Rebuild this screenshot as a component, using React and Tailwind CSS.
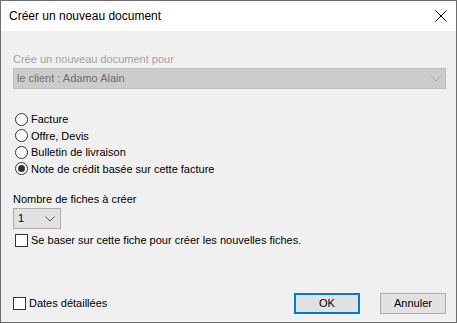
import React, { useState } from "react";

const font = { fontFamily: "'Liberation Sans', Arial, sans-serif" };

const Radio = ({ label, checked, onClick }) => (
  <div className="flex items-center h-[16.5px] cursor-default" onClick={onClick}>
    <span className="w-[13px] h-[13px] rounded-full border border-[#333333] bg-white flex items-center justify-center ml-[2px]">
      {checked && <span className="w-[7px] h-[7px] rounded-full bg-[#333333]" />}
    </span>
    <span className="ml-[3px] text-[11px] text-black">{label}</span>
  </div>
);

const Checkbox = ({ label, checked, onClick, className = "" }) => (
  <div className={"flex items-center cursor-default " + className} onClick={onClick}>
    <span className="w-[13px] h-[13px] border border-[#333333] bg-white flex items-center justify-center">
      {checked && (
        <svg width="9" height="9" viewBox="0 0 9 9">
          <path d="M1 4.5 L3.5 7 L8 1.5" fill="none" stroke="#333" strokeWidth="1.3" />
        </svg>
      )}
    </span>
    <span className="ml-[3px] text-[11px] text-black">{label}</span>
  </div>
);

const Chevron = ({ color }) => (
  <svg width="10" height="6" viewBox="0 0 10 6">
    <path d="M0.5 0.5 L5 5 L9.5 0.5" fill="none" stroke={color} strokeWidth="1" />
  </svg>
);

const App = () => {
  const [docType, setDocType] = useState(3);
  const [baseOn, setBaseOn] = useState(false);
  const [detailed, setDetailed] = useState(false);

  const options = ["Facture", "Offre, Devis", "Bulletin de livraison", "Note de crédit basée sur cette facture"];

  return (
    <div style={font} className="w-[457px] h-[323px] border border-[#6e6e6e] bg-[#f0f0f0] flex flex-col">
      <div className="h-[30px] bg-white flex items-center justify-between pl-[8px] pr-[8px]">
        <span className="text-[12px] text-black">Créer un nouveau document</span>
        <svg width="12" height="12" viewBox="0 0 12 12" className="mr-[1px]">
          <path d="M0.5 0.5 L11.5 11.5 M11.5 0.5 L0.5 11.5" stroke="#000" strokeWidth="1" />
        </svg>
      </div>

      <div className="flex-1 flex flex-col pl-[12px] pr-[10px] pb-[8px]">
        <div className="mt-[21px] text-[11px] leading-[15px] text-[#a0a0a0]">Crée un nouveau document pour</div>
        <div className="mt-[1px] h-[21px] w-[433px] bg-[#cccccc] border border-[#bfbfbf] flex items-center justify-between pl-[3px] pr-[4px]">
          <span className="text-[11px] text-[#6d6d6d]">le client : Adamo Alain</span>
          <Chevron color="#a5a5a5" />
        </div>

        <div className="mt-[22px] flex flex-col">
          {options.map((o, i) => (
            <Radio key={o} label={o} checked={docType === i} onClick={() => setDocType(i)} />
          ))}
        </div>

        <div className="mt-[15px] text-[11px] leading-[15px] text-black">Nombre de fiches à créer</div>
        <div className="mt-[1px] h-[21px] w-[48px] bg-[#e1e1e1] border border-[#adadad] flex items-center justify-between pl-[4px] pr-[5px]">
          <span className="text-[11px] text-black">1</span>
          <Chevron color="#555555" />
        </div>

        <Checkbox
          className="mt-[4px] ml-[2px] h-[14px]"
          label="Se baser sur cette fiche pour créer les nouvelles fiches."
          checked={baseOn}
          onClick={() => setBaseOn(!baseOn)}
        />

        <div className="mt-auto flex items-center">
          <Checkbox label="Dates détaillées" checked={detailed} onClick={() => setDetailed(!detailed)} />
          <button className="ml-auto w-[66px] h-[21px] bg-[#e1e1e1] border-2 border-[#0078d7] text-[11px] text-black">
            OK
          </button>
          <button className="ml-[20px] w-[66px] h-[21px] bg-[#e1e1e1] border border-[#adadad] text-[11px] text-black">
            Annuler
          </button>
        </div>
      </div>
    </div>
  );
};

export default App;
